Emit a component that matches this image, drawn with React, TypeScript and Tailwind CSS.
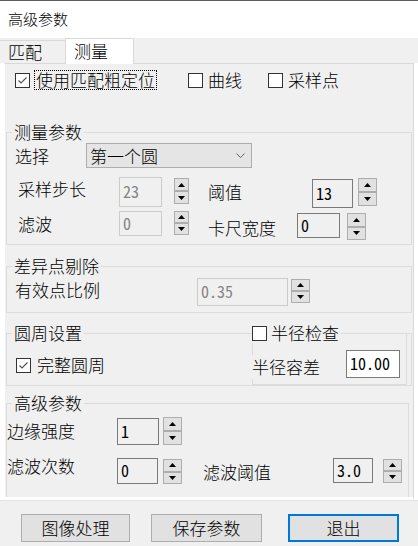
import React from "react";

const cjk = "font-['Noto_Sans_CJK_SC','Noto_Sans',sans-serif]";
const mono = "font-['Noto_Sans_Mono_CJK_SC','Liberation_Mono',monospace]";
const sans = "font-['Liberation_Sans',sans-serif]";

function CheckBox({ checked }: { checked?: boolean }) {
    return (
        <span className="flex items-center justify-center w-[15px] h-[15px] shrink-0 bg-white border border-[#333333]">
            {checked && (
                <svg width="13" height="13" viewBox="0 0 13 13">
                    <polyline points="2.5,6.5 5,9 10.5,3.5" fill="none" stroke="#555555" strokeWidth="1.2" />
                </svg>
            )}
        </span>
    );
}

function Spin({ className }: { className: string }) {
    return (
        <div className={`flex flex-col shrink-0 ${className}`}>
            <div className="flex-1 flex items-center justify-center bg-[#e1e1e1] border border-[#adadad]">
                <svg width="7" height="4" viewBox="0 0 7 4">
                    <path d="M3.5 0L7 4H0z" fill="#000" />
                </svg>
            </div>
            <div className="flex-1 flex items-center justify-center bg-[#e1e1e1] border border-[#adadad]">
                <svg width="7" height="4" viewBox="0 0 7 4">
                    <path d="M0 0H7L3.5 4z" fill="#000" />
                </svg>
            </div>
        </div>
    );
}

function Field({ className, text, disabled, white }: { className: string; text: string; disabled?: boolean; white?: boolean }) {
    const look = disabled
        ? "border-[#cccccc] text-[#838383] bg-[#f0f0f0]"
        : white
            ? "border-[#7a7a7a] text-black bg-white"
            : "border-[#7a7a7a] text-black bg-[#f0f0f0]";
    return (
        <div className={`flex items-center shrink-0 border pl-[3px] pb-[2px] text-[16px] ${mono} ${look} ${className}`}>
            {text}
        </div>
    );
}

export default function App() {
    return (
        <div className={`w-[418px] h-[546px] overflow-hidden flex flex-col bg-[#f0f0f0] text-black text-[17px] leading-[20px] font-light ${cjk}`}>
            <div className="h-[38px] shrink-0 flex items-center pl-[8px] pb-[2px] bg-white border-t border-[#5c5c5c] text-[15px]">
                高级参数
            </div>

            <div className="h-[25px] shrink-0 flex items-end">
                <div className="h-[23px] w-[65px] flex items-center pl-[8px] border-t border-[#d9d9d9]">匹配</div>
                <div className="relative h-[26px] w-[69px] -mb-[1px] flex items-center pl-[8px] pb-[1px] bg-white border border-b-0 border-[#d9d9d9]">
                    测量
                </div>
            </div>

            <div className="flex shrink-0 bg-white">
                <div className="ml-[4px] w-[410px] h-[437px] overflow-hidden flex flex-col bg-[#f0f0f0] border-t border-t-[#d9d9d9] border-l border-l-white border-r border-r-[#d9d9d9] border-b-[3px] border-b-white">
                    <div className="mt-[6px] h-[23px] flex items-center">
                        <span className="ml-[10px]"><CheckBox checked /></span>
                        <span className="ml-[4px] px-[1px] border border-dotted border-black leading-[18px]">使用匹配粗定位</span>
                        <span className="ml-[31px]"><CheckBox /></span>
                        <span className="ml-[5px]">曲线</span>
                        <span className="ml-[26px]"><CheckBox /></span>
                        <span className="ml-[5px]">采样点</span>
                    </div>

                    <fieldset className="mt-[32px] ml-[1px] w-[406px] border border-[#dcdcdc] pb-[4px]">
                        <legend className="ml-[5px] px-[2px] leading-[20px]">测量参数</legend>
                        <div className="mt-[1px] h-[25px] flex items-center">
                            <span className="ml-[8px] w-[71px]">选择</span>
                            <div className="w-[166px] h-[25px] flex items-center justify-between pl-[3px] pr-[6px] bg-[#e5e5e5] border border-[#adadad]">
                                <span>第一个圆</span>
                                <svg width="9" height="5" viewBox="0 0 9 5">
                                    <polyline points="0.5,0.5 4.5,4.5 8.5,0.5" fill="none" stroke="#606060" strokeWidth="1" />
                                </svg>
                            </div>
                        </div>
                        <div className="mt-[9px] flex items-start">
                            <span className="ml-[11px] mt-[2px] w-[101px]">采样步长</span>
                            <Field className={`w-[43px] h-[30px] ${sans}`} text="23" disabled />
                            <Spin className="ml-[12px] mt-[1px] w-[15px] h-[26px]" />
                            <span className="ml-[19px] mt-[5px] w-[104px]">阈值</span>
                            <Field className="mt-[2px] w-[41px] h-[29px]" text="13" />
                            <Spin className="ml-[5px] mt-[1px] w-[19px] h-[28px]" />
                        </div>
                        <div className="mt-[3px] flex items-start">
                            <span className="ml-[11px] mt-[3px] w-[101px]">滤波</span>
                            <Field className={`w-[43px] h-[25px] ${sans}`} text="0" disabled />
                            <Spin className="ml-[12px] w-[15px] h-[24px]" />
                            <span className="ml-[19px] mt-[7px] w-[89px]">卡尺宽度</span>
                            <Field className="mt-[2px] w-[43px] h-[25px]" text="0" />
                            <Spin className="ml-[7px] mt-[2px] w-[19px] h-[27px]" />
                        </div>
                    </fieldset>

                    <fieldset className="mt-[11px] ml-[1px] w-[406px] border border-[#dcdcdc] pb-[6px]">
                        <legend className="ml-[5px] px-[2px] leading-[20px]">差异点剔除</legend>
                        <div className="mt-[2px] flex items-start">
                            <span className="ml-[8px] mt-[2px] w-[182px]">有效点比例</span>
                            <Field className="w-[91px] h-[28px]" text="0.35" disabled />
                            <Spin className="ml-[3px] mt-[1px] w-[19px] h-[24px]" />
                        </div>
                    </fieldset>

                    <fieldset className="mt-[10px] ml-[1px] w-[406px] border border-[#dcdcdc]">
                        <legend className="ml-[5px] px-[2px] leading-[20px]">圆周设置</legend>
                        <div className="flex items-start">
                            <div className="w-[245px] mt-[12px] h-[20px] flex items-center">
                                <span className="ml-[9px]"><CheckBox checked /></span>
                                <span className="ml-[6px]">完整圆周</span>
                            </div>
                            <fieldset className="-mt-[20px] w-[155px] border border-[#dcdcdc] pb-[5px]">
                                <legend className="-ml-[1px] pr-[2px] bg-[#f0f0f0] leading-[20px]">
                                    <span className="flex items-center">
                                        <CheckBox />
                                        <span className="ml-[4px]">半径检查</span>
                                    </span>
                                </legend>
                                <div className="flex items-start">
                                    <span className="-ml-[1px] mt-[12px] w-[94px] leading-[24px] bg-[#f0f0f0]">半径容差</span>
                                    <Field className="mt-[7px] w-[54px] h-[28px]" text="10.00" white />
                                </div>
                            </fieldset>
                        </div>
                    </fieldset>

                    <fieldset className="mt-[7px] ml-[1px] w-[403px] border border-[#dcdcdc] pb-[20px]">
                        <legend className="ml-[5px] px-[2px] leading-[20px]">高级参数</legend>
                        <div className="mt-[4px] flex items-start">
                            <span className="mt-[4px] w-[110px]">边缘强度</span>
                            <Field className="mt-[1px] w-[42px] h-[27px]" text="1" />
                            <Spin className="ml-[4px] w-[19px] h-[28px]" />
                        </div>
                        <div className="mt-[11px] flex items-start">
                            <span className="w-[110px]">滤波次数</span>
                            <Field className="mt-[2px] w-[41px] h-[26px]" text="0" />
                            <Spin className="ml-[5px] mt-[3px] w-[19px] h-[25px]" />
                            <span className="ml-[21px] mt-[6px] w-[130px]">滤波阈值</span>
                            <Field className="mt-[2px] w-[40px] h-[25px]" text="3.0" />
                            <Spin className="ml-[10px] mt-[3px] w-[19px] h-[24px]" />
                        </div>
                    </fieldset>
                </div>
                <div className="w-[4px]" />
            </div>

            <div className="flex-1 flex items-start pt-[13px] border-t border-[#e3e3e3]">
                <button className="ml-[21px] w-[109px] h-[28px] bg-[#e1e1e1] border border-[#adadad]">图像处理</button>
                <button className="ml-[21px] w-[111px] h-[28px] bg-[#e1e1e1] border border-[#adadad]">保存参数</button>
                <button className="ml-[26px] w-[111px] h-[28px] bg-[#e1e1e1] border-2 border-[#0078d7]">退出</button>
            </div>
        </div>
    );
}
